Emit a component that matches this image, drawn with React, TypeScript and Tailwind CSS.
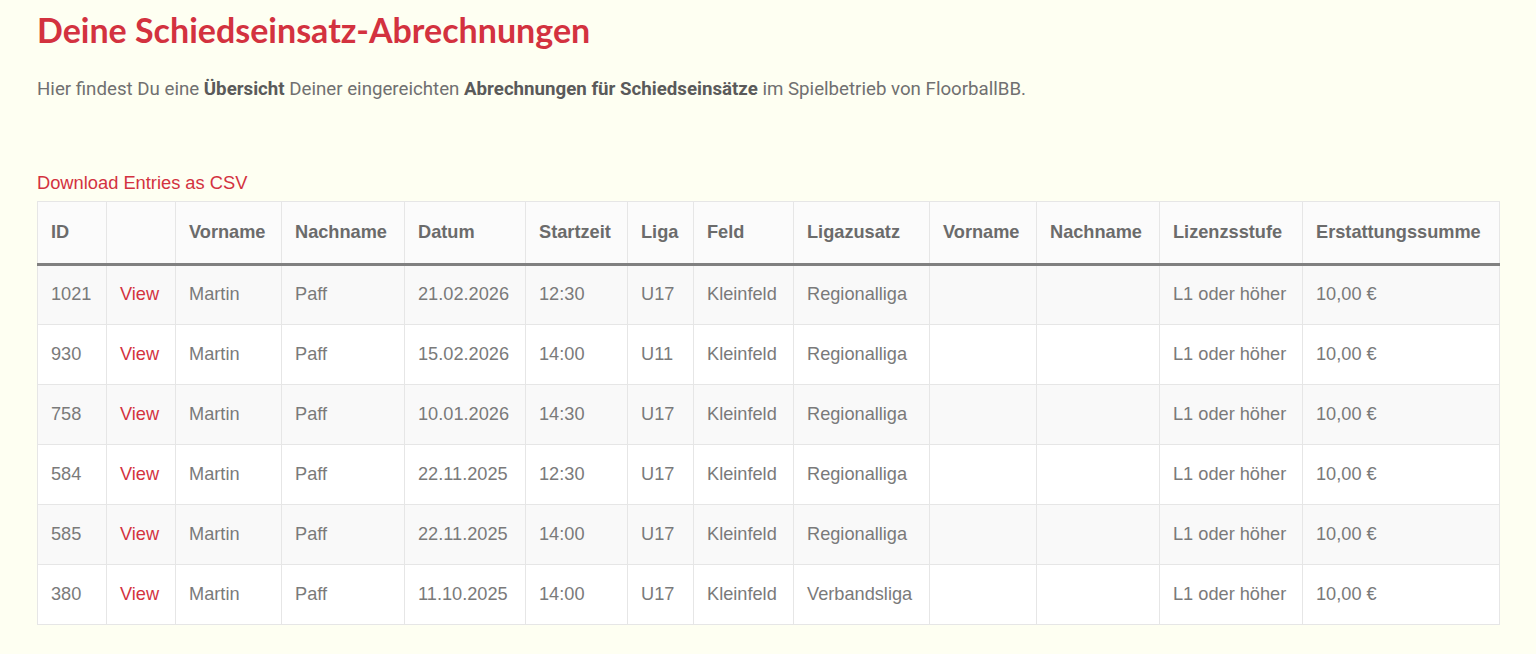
import React from 'react';

type Row = {
    id: number;
    datum: string;
    start: string;
    liga: string;
    feld: string;
    zusatz: string;
};

const rows: Row[] = [
    { id: 1021, datum: '21.02.2026', start: '12:30', liga: 'U17', feld: 'Kleinfeld', zusatz: 'Regionalliga' },
    { id: 930, datum: '15.02.2026', start: '14:00', liga: 'U11', feld: 'Kleinfeld', zusatz: 'Regionalliga' },
    { id: 758, datum: '10.01.2026', start: '14:30', liga: 'U17', feld: 'Kleinfeld', zusatz: 'Regionalliga' },
    { id: 584, datum: '22.11.2025', start: '12:30', liga: 'U17', feld: 'Kleinfeld', zusatz: 'Regionalliga' },
    { id: 585, datum: '22.11.2025', start: '14:00', liga: 'U17', feld: 'Kleinfeld', zusatz: 'Regionalliga' },
    { id: 380, datum: '11.10.2025', start: '14:00', liga: 'U17', feld: 'Kleinfeld', zusatz: 'Verbandsliga' },
];

const headers = [
    'ID',
    '',
    'Vorname',
    'Nachname',
    'Datum',
    'Startzeit',
    'Liga',
    'Feld',
    'Ligazusatz',
    'Vorname',
    'Nachname',
    'Lizenzsstufe',
    'Erstattungssumme',
];

const widths = [69, 69, 106, 123, 121, 102, 66, 100, 136, 107, 123, 143, 197];

const cell = 'border border-[#e6e6e6] px-[13px] align-middle';

export default function App() {
    return (
        <div className="min-h-[654px] bg-[#fefff2] px-[37px] pt-[10px] font-['Liberation_Sans',Arial,sans-serif]">
            <h1 className="font-['Lato',sans-serif] text-[34px] font-bold leading-[40px] text-[#d3323f]">
                Deine Schiedseinsatz-Abrechnungen
            </h1>
            <p className="mt-[27px] font-['Roboto',sans-serif] text-[18.7px] leading-[24px] text-[#707070]">
                Hier findest Du eine <strong className="font-bold text-[#5a5a5a]">Übersicht</strong> Deiner
                eingereichten <strong className="font-bold text-[#5a5a5a]">Abrechnungen für Schiedseinsätze</strong>{' '}
                im Spielbetrieb von FloorballBB.
            </p>

            <a href="#" className="mt-[71px] block text-[18.3px] leading-[22px] text-[#d3323f]">
                Download Entries as CSV
            </a>

            <table className="mt-[7px] w-[1462px] table-fixed border-collapse text-left text-[18.2px]">
                <colgroup>
                    {widths.map((w, i) => (
                        <col key={i} style={{ width: w }} />
                    ))}
                </colgroup>
                <thead className="bg-[#fbfbfb]">
                    <tr className="h-[63px]">
                        {headers.map((h, i) => (
                            <th key={i} className={`${cell} border-b-[3px] border-b-[#808080] font-bold text-[#6b6b6b]`}>
                                {h}
                            </th>
                        ))}
                    </tr>
                </thead>
                <tbody className="text-[#7a7a7a]">
                    {rows.map((row, i) => (
                        <tr key={row.id} className={i % 2 === 0 ? 'h-[60px] bg-[#f9f9f9]' : 'h-[60px] bg-white'}>
                            <td className={cell}>{row.id}</td>
                            <td className={cell}>
                                <a href="#" className="text-[#d3323f]">View</a>
                            </td>
                            <td className={cell}>Martin</td>
                            <td className={cell}>Paff</td>
                            <td className={cell}>{row.datum}</td>
                            <td className={cell}>{row.start}</td>
                            <td className={cell}>{row.liga}</td>
                            <td className={cell}>{row.feld}</td>
                            <td className={cell}>{row.zusatz}</td>
                            <td className={cell}></td>
                            <td className={cell}></td>
                            <td className={cell}>L1 oder höher</td>
                            <td className={cell}>10,00 €</td>
                        </tr>
                    ))}
                </tbody>
            </table>
        </div>
    );
}
